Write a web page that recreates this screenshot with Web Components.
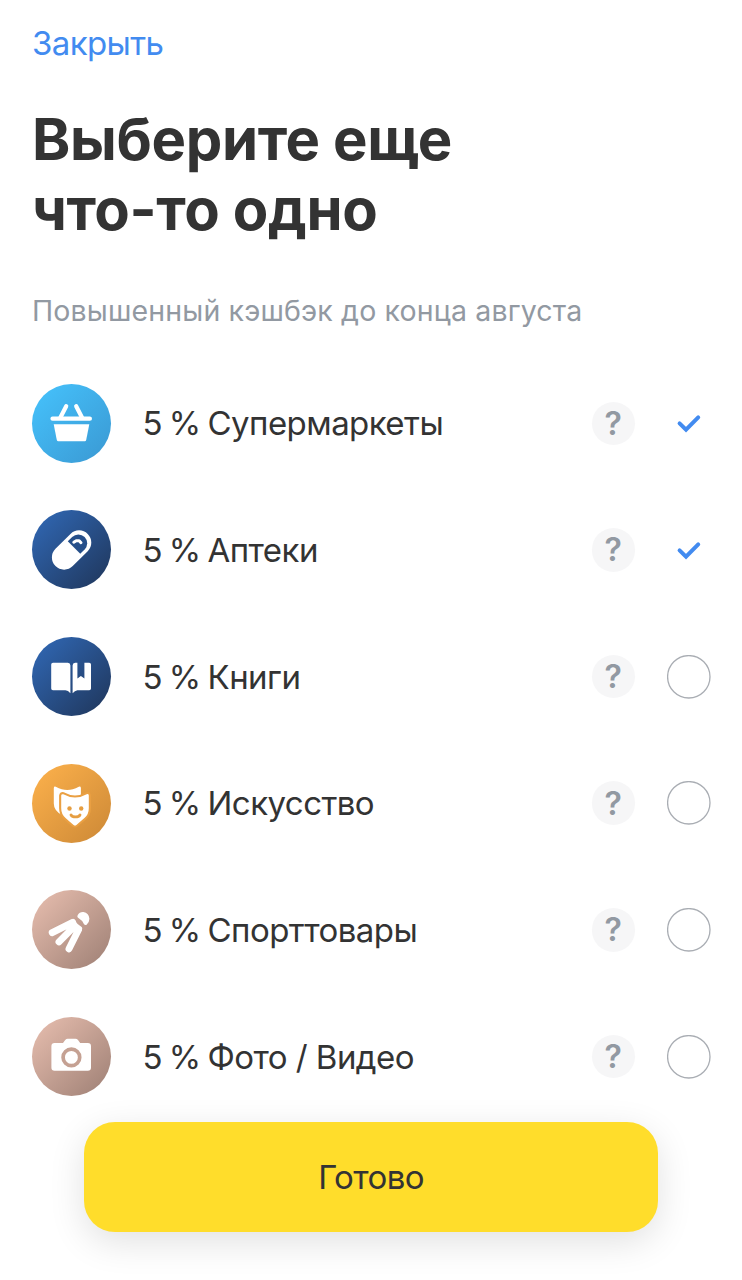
<!DOCTYPE html>
<html lang="ru">
<head>
<meta charset="utf-8">
<meta name="viewport" content="width=device-width, initial-scale=1">
<title>Повышенный кэшбэк</title>
<style>
    body {
        margin: 0;
        background: #fff;
        color: #333;
        font-family: Inter, "Liberation Sans", sans-serif;
    }
</style>
</head>
<body>
<cashback-screen>
    <text-link slot="nav">Закрыть</text-link>
    <screen-heading slot="heading">
        Выберите еще<br>что-то одно
        <span slot="subtitle">Повышенный кэшбэк до конца августа</span>
    </screen-heading>
    <category-row icon="basket" rate="5 %" checked>Супермаркеты</category-row>
    <category-row icon="pill" rate="5 %" checked>Аптеки</category-row>
    <category-row icon="book" rate="5 %">Книги</category-row>
    <category-row icon="masks" rate="5 %">Искусство</category-row>
    <category-row icon="shuttlecock" rate="5 %">Спорттовары</category-row>
    <category-row icon="camera" rate="5 %">Фото / Видео</category-row>
    <primary-button slot="action">Готово</primary-button>
</cashback-screen>

<script>
const ICONS = {
    basket: {
        from: '#45c1fb', to: '#3a98d2',
        art: `
            <path d="M34.2 22.2 28.4 33.5M44.2 22.2 50 33.5" fill="none" stroke="#fff" stroke-width="4.2" stroke-linecap="round"/>
            <rect x="18.4" y="32.6" width="41.6" height="4.2" rx="2.1"/>
            <path d="M21.7 40.2h35.6L54.2 56q-.3 1.2-1.4 1.2H26.2q-1.1 0-1.4-1.2z"/>`
    },
    pill: {
        from: '#3067b3', to: '#1f3559',
        art: `
            <g transform="translate(39.6 40) rotate(-45)">
                <rect x="-22.8" y="-12.2" width="45.6" height="24.4" rx="12.2"/>
                <path d="M3.4-8.8H9.6a8.8 8.8 0 0 1 0 17.6H3.4z" fill="#264f8a"/>
            </g>
            <path d="m41.8 32.2 2.4-1.5h3l1.8 2" fill="none" stroke="#fff" stroke-width="3" stroke-linecap="round" stroke-linejoin="round"/>`
    },
    book: {
        from: '#3067b3', to: '#1f3559',
        art: `
            <path d="M21 25.8h14.8q2.6.2 2.6 2.6v27.8q-2.3-2.7-5-2.9H21q-1.8 0-1.8-1.8V27.6q0-1.8 1.8-1.8z"/>
            <path d="M43.2 25.8h2.2v15.8l3.5-2.7 3.5 2.7V25.8h4.8q1.8 0 1.8 1.8v23.9q0 1.8-1.8 1.8H45.4q-2.6.3-4.8 2.9V28.4q0-2.4 2.6-2.6z"/>`
    },
    masks: {
        from: '#fbb04b', to: '#cc8836',
        art: `
            <path d="M21.8 24q.2-1.9 2-1.2 6.2 3.3 11.500 3.300t11.500-3.300q1.900-.7 2.100 1.200v16L30 51q-8.200-4.300-8.200-11.500z"/>
            <path d="M29.2 31.600q.2-1.900 2.100-1.300Q37 33.500 43 33.500t11.700-3.300q1.900-.6 2.100 1.300v12.700q0 6-4.100 9.500-3.700 3.300-8.300 7.200-1.400 1-2.800 0-4.600-3.700-8.300-7.200-4.100-3.700-4.100-9.500z" stroke="#eaa043" stroke-width="4.2" paint-order="stroke"/>
            <g fill="#e69e41">
                <circle cx="37.5" cy="44.5" r="2.2"/>
                <circle cx="49.2" cy="44.5" r="2.2"/>
            </g>
            <path d="M39 51c1.600 2.600 7.400 2.600 9 0" fill="none" stroke="#e69e41" stroke-width="2.800" stroke-linecap="round"/>`
    },
    shuttlecock: {
        from: '#e5bcad', to: '#9d7f74',
        art: `
            <path d="M45.6 25.2q2-3.600 5.800-3.300 5.600 1 6 6.800 0 3.500-2.800 6-1.700.8-2.700-.8-1.800-3.600-5.500-5.800-1.700-1.100-.8-2.900z"/>
            <path d="M38.500 30.200Q41.300 28.300 43 31q2.500 3.600 6 5.400 2 1.200.8 3.800l-2 3-5.500-2.200-6-3.500z"/>
            <path d="m20.200 42.600 20.500-10.200M27 51.800l14.800-15M37 58.800l9.500-19" fill="none" stroke="#fff" stroke-width="6.900" stroke-linecap="round"/>`
    },
    camera: {
        from: '#e5bcad', to: '#9d7f74',
        art: `
            <path d="M22.600 26H31l2.200-3q1.100-1.200 2.500-1.200h7.800q1.500 0 2.500 1.200l2.200 3h7.600q3.200 0 3.200 3.200v21.300q0 3.200-3.200 3.200H22.600q-3.200 0-3.200-3.200V29.200q0-3.200 3.200-3.200z"/>
            <circle cx="39.400" cy="40.400" r="8.300" fill="none" stroke="#c5a193" stroke-width="3.700"/>`
    }
};

class CashbackScreen extends HTMLElement {
    constructor() {
        super();
        this.attachShadow({ mode: 'open' }).innerHTML = `
        <style>
            :host {
                display: flex;
                flex-direction: column;
                box-sizing: border-box;
                height: 1280px;
                overflow: hidden;
            }
            header {
                box-sizing: border-box;
                height: 360px;
                padding: 21px 32px 0;
            }
            main {
                display: grid;
                grid-template-rows: repeat(6, 126.65px);
                padding: 0 31.5px;
            }
            footer {
                padding: 2px 84px 0;
            }
        </style>
        <header>
            <slot name="nav"></slot>
            <slot name="heading"></slot>
        </header>
        <main><slot></slot></main>
        <footer><slot name="action"></slot></footer>`;
    }
}

class TextLink extends HTMLElement {
    constructor() {
        super();
        this.attachShadow({ mode: 'open' }).innerHTML = `
        <style>
            :host {
                display: block;
                color: #428bf0;
                font-size: 33px;
                line-height: 44px;
                letter-spacing: -0.6px;
                cursor: pointer;
            }
        </style>
        <slot></slot>`;
    }
}

class ScreenHeading extends HTMLElement {
    constructor() {
        super();
        this.attachShadow({ mode: 'open' }).innerHTML = `
        <style>
            :host {
                display: block;
            }
            h1 {
                margin: 38.5px 0 0;
                font-size: 58px;
                line-height: 70.5px;
                font-weight: 700;
                letter-spacing: -0.35px;
            }
            p {
                margin: 48.5px 0 0;
                color: #9299a2;
                font-size: 28.5px;
                line-height: 36px;
                letter-spacing: 0.15px;
            }
        </style>
        <h1><slot></slot></h1>
        <p><slot name="subtitle"></slot></p>`;
    }
}

class CategoryIcon extends HTMLElement {
    connectedCallback() {
        const icon = ICONS[this.getAttribute('name')];
        if (!this.shadowRoot) this.attachShadow({ mode: 'open' });
        this.shadowRoot.innerHTML = `
        <style>
            :host {
                display: block;
                width: 79px;
                height: 79px;
                border-radius: 50%;
                background: linear-gradient(135deg, ${icon.from} 5%, ${icon.to} 100%);
            }
            svg {
                display: block;
            }
        </style>
        <svg width="79" height="79" viewBox="0 0 79 79" fill="#fff" aria-hidden="true">${icon.art}</svg>`;
    }
}

class HelpButton extends HTMLElement {
    constructor() {
        super();
        this.attachShadow({ mode: 'open' }).innerHTML = `
        <style>
            :host {
                display: grid;
                place-content: center;
                width: 43.5px;
                height: 43.5px;
                border-radius: 50%;
                background: #f6f6f7;
                color: #9299a2;
                font-size: 32px;
                line-height: 44px;
                font-weight: 600;
                cursor: pointer;
            }
            span {
                padding-top: 1px;
            }
        </style>
        <span>?</span>`;
    }
}

class CheckMark extends HTMLElement {
    constructor() {
        super();
        this.attachShadow({ mode: 'open' }).innerHTML = `
        <style>
            :host {
                display: block;
                width: 44px;
                height: 44px;
            }
            svg {
                display: block;
            }
            .tick, :host([checked]) .ring {
                display: none;
            }
            :host([checked]) .tick {
                display: inline;
            }
        </style>
        <svg width="44" height="44" viewBox="0 0 44 44" fill="none">
            <circle class="ring" cx="21.8" cy="21.8" r="21.2" stroke="#a9adb3" stroke-width="1.3"/>
            <path class="tick" d="m12.6 22.4 6.4 6.2L31.200 16.300" stroke="#428bf0" stroke-width="4" stroke-linecap="round"/>
        </svg>`;
    }
}

class CategoryRow extends HTMLElement {
    connectedCallback() {
        if (!this.shadowRoot) this.attachShadow({ mode: 'open' });
        this.shadowRoot.innerHTML = `
        <style>
            :host {
                display: flex;
                align-items: center;
            }
            .label {
                flex: 1;
                padding-left: 32px;
                font-size: 33px;
                line-height: 44px;
                letter-spacing: -0.55px;
                white-space: nowrap;
            }
            .rate {
                word-spacing: -1.9px;
            }
            check-mark {
                margin-left: 31.5px;
            }
        </style>
        <category-icon name="${this.getAttribute('icon')}"></category-icon>
        <div class="label"><span class="rate">${this.getAttribute('rate')} </span><slot></slot></div>
        <help-button></help-button>
        <check-mark ${this.hasAttribute('checked') ? 'checked' : ''}></check-mark>`;
    }
}

class PrimaryButton extends HTMLElement {
    constructor() {
        super();
        this.attachShadow({ mode: 'open' }).innerHTML = `
        <style>
            :host {
                display: block;
            }
            button {
                display: block;
                width: 100%;
                height: 110.5px;
                padding: 0;
                border: 0;
                border-radius: 31px;
                background: #ffdd2b;
                box-shadow: 0 10px 36px rgb(0 0 0 / 0.12);
                color: #333;
                font: inherit;
                font-size: 33px;
                letter-spacing: -0.6px;
                cursor: pointer;
            }
        </style>
        <button type="button"><slot></slot></button>`;
    }
}

customElements.define('cashback-screen', CashbackScreen);
customElements.define('text-link', TextLink);
customElements.define('screen-heading', ScreenHeading);
customElements.define('category-icon', CategoryIcon);
customElements.define('help-button', HelpButton);
customElements.define('check-mark', CheckMark);
customElements.define('category-row', CategoryRow);
customElements.define('primary-button', PrimaryButton);
</script>
</body>
</html>
